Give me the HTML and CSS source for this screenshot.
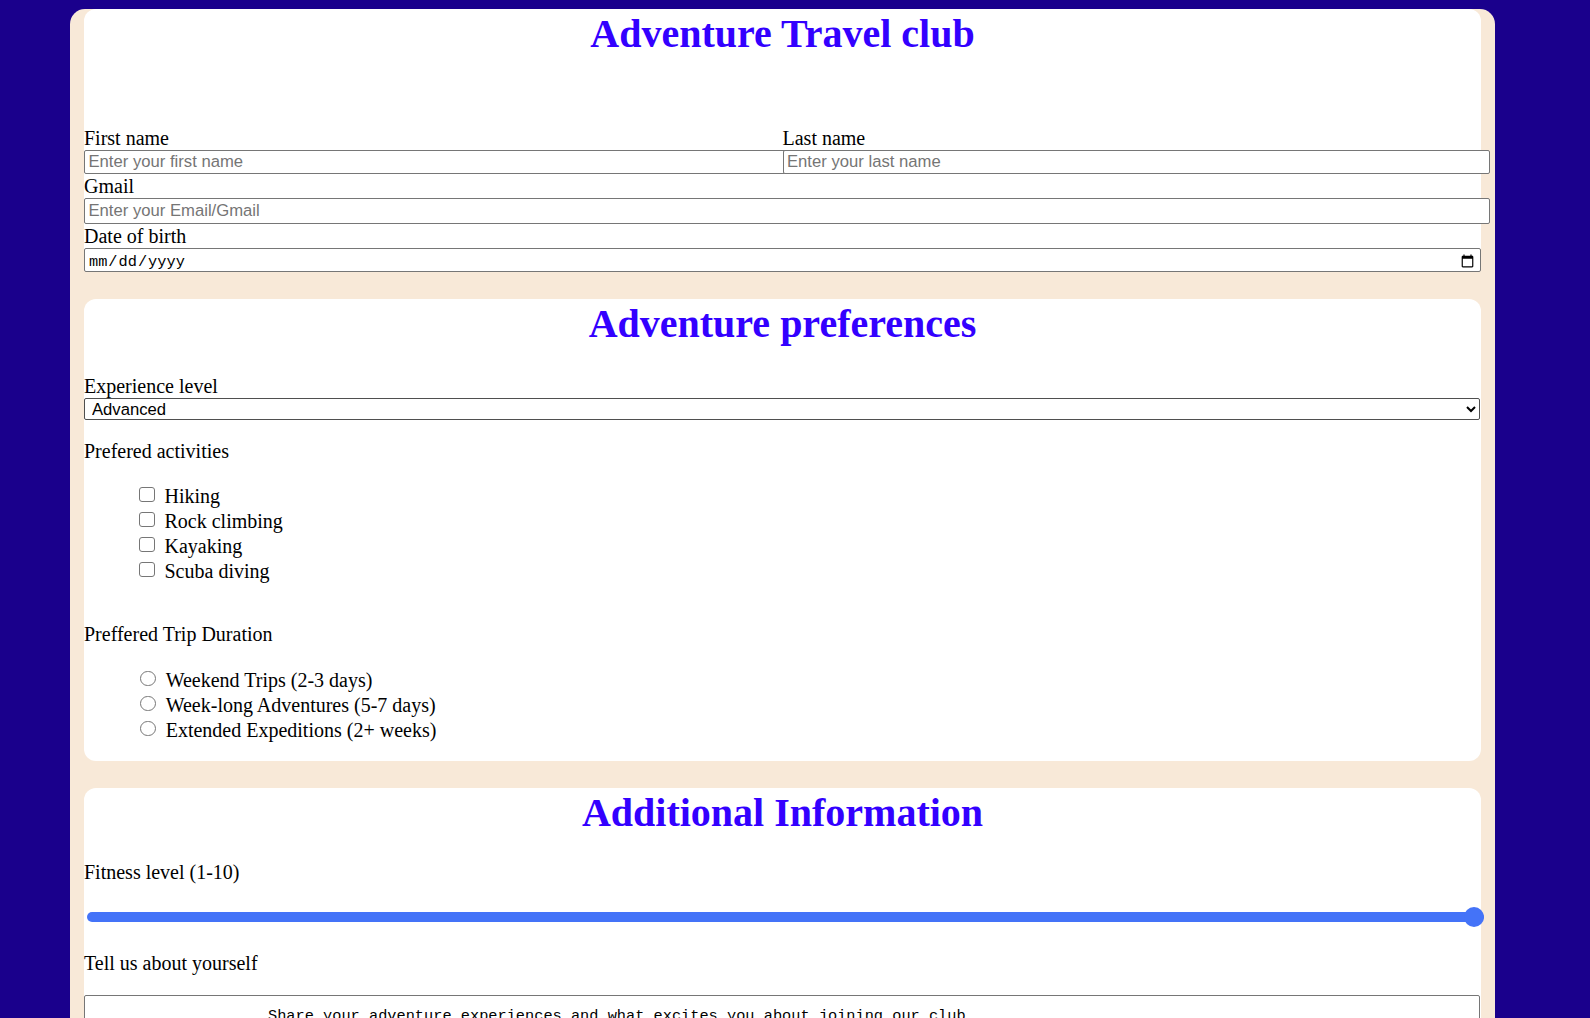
FILE: index.html
```html
<!DOCTYPE html>
<html lang="en">
<head>
<meta charset="utf-8">
<title>Adventure Travel club</title>
<link rel="stylesheet" href="styles.css">
</head>
<body>
<div class="page">
  <form class="club">
    <section class="card card-personal">
      <h1 class="title title-main">Adventure Travel club</h1>
      <div class="name-row">
        <div class="field half">
          <label class="field-label" for="first">First name</label>
          <input class="text-input" id="first" type="text" placeholder="Enter your first name">
        </div>
        <div class="field half">
          <label class="field-label" for="last">Last name</label>
          <input class="text-input" id="last" type="text" placeholder="Enter your last name">
        </div>
      </div>
      <div class="field">
        <label class="field-label" for="mail">Gmail</label>
        <input class="text-input email-input" id="mail" type="email" placeholder="Enter your Email/Gmail">
      </div>
      <div class="field">
        <label class="field-label" for="dob">Date of birth</label>
        <input class="date-input" id="dob" type="date">
      </div>
    </section>

    <section class="card card-prefs">
      <h1 class="title">Adventure preferences</h1>
      <label class="field-label" for="level">Experience level</label>
      <select class="select-input" id="level">
        <option>Beginner</option>
        <option>Intermediate</option>
        <option selected>Advanced</option>
      </select>
      <p class="group-label group-activities">Prefered activities</p>
      <ul class="choice-list">
        <li class="choice"><input class="check" type="checkbox" id="a1"><label for="a1">Hiking</label></li>
        <li class="choice"><input class="check" type="checkbox" id="a2"><label for="a2">Rock climbing</label></li>
        <li class="choice"><input class="check" type="checkbox" id="a3"><label for="a3">Kayaking</label></li>
        <li class="choice"><input class="check" type="checkbox" id="a4"><label for="a4">Scuba diving</label></li>
      </ul>
      <p class="group-label group-duration">Preffered Trip Duration</p>
      <ul class="choice-list radio-list">
        <li class="choice"><input class="radio" type="radio" name="dur" id="d1"><label for="d1">Weekend Trips (2-3 days)</label></li>
        <li class="choice"><input class="radio" type="radio" name="dur" id="d2"><label for="d2">Week-long Adventures (5-7 days)</label></li>
        <li class="choice"><input class="radio" type="radio" name="dur" id="d3"><label for="d3">Extended Expeditions (2+ weeks)</label></li>
      </ul>
    </section>

    <section class="card card-extra">
      <h1 class="title title-extra">Additional Information</h1>
      <p class="plain-label">Fitness level (1-10)</p>
      <input class="range-input" type="range" min="1" max="10" value="10">
      <p class="plain-label about-label">Tell us about yourself</p>
      <textarea class="about-input">Share your adventure experiences and what excites you about joining our club</textarea>
    </section>
  </form>
</div>
</body>
</html>
```
FILE: styles.css
```css
html, body {
  margin: 0;
  padding: 0;
}

body {
  background: #1a008c;
  font-family: "Liberation Serif", "Times New Roman", serif;
  font-size: 20px;
  color: #000;
}

.page {
  width: 1425px;
  margin: 9px 0 0 70px;
  padding: 0 14px 28px;
  box-sizing: border-box;
  background: #f8e9d8;
  border-radius: 15px;
}

.club {
  display: flex;
  flex-direction: column;
  gap: 27.3px;
}

.card {
  background: #fff;
  border-radius: 12px;
  display: flex;
  flex-direction: column;
  align-items: stretch;
}

.title {
  margin: 0 0 26.7px;
  padding-top: 2px;
  font-size: 40px;
  line-height: 46px;
  font-weight: bold;
  text-align: center;
  color: #3300ff;
}

.title-main {
  margin-bottom: 68.7px;
}

.title-extra {
  margin-bottom: 25px;
}

.name-row {
  display: flex;
}

.field {
  display: flex;
  flex-direction: column;
  align-items: flex-start;
}

.half {
  flex: 1 1 0;
  min-width: 0;
}

.field-label {
  display: block;
  line-height: 24px;
  height: 24px;
}

.text-input {
  box-sizing: border-box;
  width: calc(100% + 9px);
  height: 24.6px;
  margin: 0;
  padding: 0 3.5px;
  border: 1px solid #767676;
  border-radius: 2px;
  background: #fff;
  font-family: "Liberation Sans", Arial, sans-serif;
  font-size: 16.67px;
  color: #000;
  position: relative;
}

.text-input::placeholder {
  color: #757575;
}

.email-input {
  height: 25.8px;
}

.date-input {
  box-sizing: border-box;
  width: 100%;
  height: 24px;
  margin: 0;
  padding: 3px 3px 0;
  border: 1px solid #767676;
  border-radius: 2px;
  background: #fff;
  font-family: "Liberation Mono", monospace;
  font-size: 15.3px;
  color: #000;
}

.select-input {
  box-sizing: border-box;
  width: calc(100% - 1px);
  height: 22.4px;
  margin: -0.5px 0 0;
  padding: 0 0 0 3px;
  border: 1px solid #4f4f4f;
  border-radius: 2px;
  background: #fff;
  font-family: "Liberation Sans", Arial, sans-serif;
  font-size: 16.67px;
  color: #000;
}

.group-label {
  margin: 20px 0 0;
  line-height: 23px;
}

.group-duration {
  margin-top: 41.5px;
}

.choice-list {
  list-style: none;
  margin: 19px 0 0;
  padding: 0 0 0 50px;
}

.radio-list {
  margin-top: 19.3px;
  margin-bottom: 20px;
}

.choice {
  display: flex;
  align-items: flex-start;
  height: 25px;
}

.choice label {
  margin-left: 10px;
  padding-top: 3px;
  line-height: 22px;
}

.check {
  -webkit-appearance: none;
  appearance: none;
  box-sizing: border-box;
  width: 15.5px;
  height: 15.5px;
  margin: 4.7px 0 0 5px;
  border: 1px solid #767676;
  border-radius: 3px;
  background: #fff;
}

.radio {
  -webkit-appearance: none;
  appearance: none;
  box-sizing: border-box;
  width: 15.7px;
  height: 15.7px;
  margin: 4.8px 0 0 6px;
  border: 1px solid #767676;
  border-radius: 50%;
  background: #fff;
}

.plain-label {
  margin: 0;
  line-height: 23px;
}

.about-label {
  margin-top: 25.3px;
}

.range-input {
  -webkit-appearance: none;
  appearance: none;
  box-sizing: border-box;
  width: 100%;
  height: 20px;
  margin: 23px 0 0 2.5px;
  padding: 0;
  background: transparent;
}

.range-input::-webkit-slider-runnable-track {
  height: 10px;
  background: #4473f8;
  border-radius: 5px;
}

.range-input::-webkit-slider-thumb {
  -webkit-appearance: none;
  appearance: none;
  width: 20px;
  height: 20px;
  margin-top: -5px;
  border-radius: 50%;
  background: #4473f8;
  border: none;
}

.about-input {
  box-sizing: border-box;
  width: calc(100% - 1px);
  height: 160px;
  margin: 20px 0 0;
  padding: 11px 3px 3px;
  text-indent: 180px;
  border: 1px solid #767676;
  border-radius: 2px;
  background: #fff;
  font-family: "Liberation Mono", monospace;
  font-size: 15.3px;
  color: #000;
  resize: vertical;
}
```
